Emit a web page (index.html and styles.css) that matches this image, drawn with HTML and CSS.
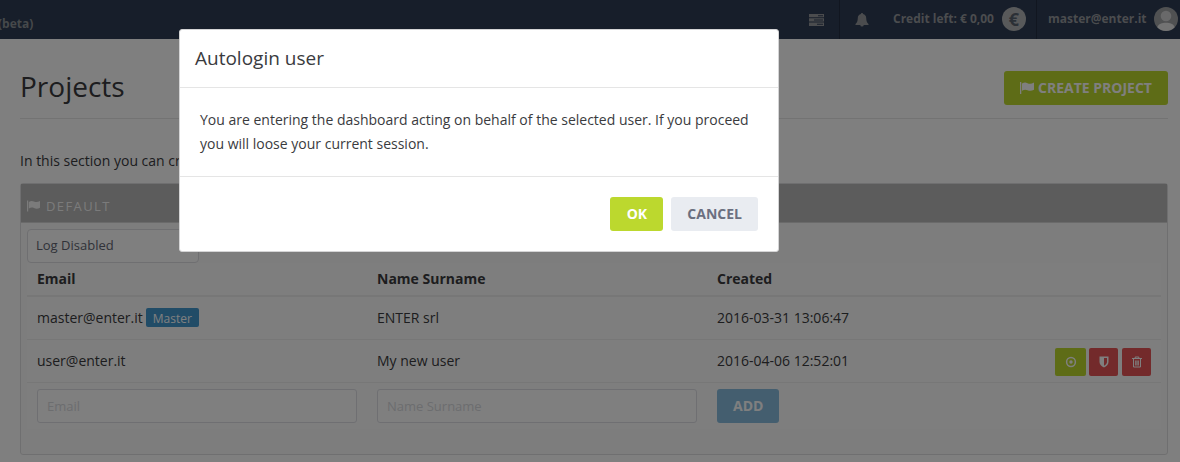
FILE: index.html
```html
<!DOCTYPE html>
<html lang="en">
<head>
<meta charset="utf-8">
<title>Projects</title>
<link rel="stylesheet" href="styles.css">
</head>
<body>
<header class="topbar">
  <span class="brand">(beta)</span>
  <nav class="nav">
    <a class="nav-tasks"><svg width="15" height="12" viewBox="0 0 15 12"><path fill="currentColor" fill-rule="evenodd" d="M0 0h15v3.300H0zM0 4.200h15v3.400H0zM0 8.500h15v3.400H0zM9 1.200v1h5v-1zM5 5.400v1h9v-1zM8 9.700v1h6v-1z"/></svg></a>
    <a class="nav-bell"><svg width="14" height="14" viewBox="0 0 14 14"><path fill="currentColor" d="M7 0c.6 0 1 .4 1 1 2 .4 3.200 2 3.200 4 0 3.200.9 4.800 2.300 5.900v1H8.700a1.700 1.700 0 0 1-3.400 0H.5v-1C1.900 9.800 2.800 8.200 2.800 5 2.800 3 4 1.400 6 1c0-.6.4-1 1-1z"/></svg></a>
    <a class="nav-credit">Credit left: € 0,00 <span class="coin">€</span></a>
    <a class="nav-user">master@enter.it <svg class="avatar" width="24" height="24" viewBox="0 0 24 24"><circle cx="12" cy="12" r="12" fill="#a0a2a4"/><circle cx="12" cy="9" r="5.300" fill="#d2d3d4"/><path fill="#e6e6e6" d="M3.300 20.200C4.500 17 8 15.800 12 15.800s7.500 1.200 8.700 4.400A12 12 0 0 1 3.300 20.200z"/></svg></a>
  </nav>
</header>
<main class="page">
  <div class="page-head">
    <h1>Projects</h1>
    <button class="btn green create"><svg width="14" height="12" viewBox="0 0 14 12"><path fill="currentColor" d="M0 0h1.300v12H0zM2 1.600C4 .4 5.500.2 7.500 1.200S11.500 2 14 .6v7.200c-2.500 1.400-4.500 1.300-6.500.4S4 7.600 2 8.800z"/></svg> CREATE PROJECT</button>
  </div>
  <p class="intro">In this section you can create and manage your projects.</p>
  <section class="panel">
    <h2 class="panel-title"><svg width="13" height="12" viewBox="0 0 14 12"><path fill="currentColor" d="M0 0h1.300v12H0zM2 1.600C4 .4 5.500.2 7.500 1.200S11.500 2 14 .6v7.200c-2.500 1.400-4.500 1.300-6.500.4S4 7.600 2 8.800z"/></svg><span>DEFAULT</span></h2>
    <div class="panel-body">
      <div class="select">Log Disabled</div>
      <div class="table">
        <div class="row head"><span>Email</span><span>Name Surname</span><span>Created</span></div>
        <div class="row"><span class="user">master@enter.it <b class="label">Master</b></span><span>ENTER srl</span><span>2016-03-31 13:06:47</span></div>
        <div class="row"><span>user@enter.it</span><span>My new user</span><span>2016-04-06 12:52:01</span>
          <span class="actions">
            <button class="mini green login"><svg width="12" height="12" viewBox="0 0 12 12"><circle cx="6" cy="6" r="4.400" fill="none" stroke="currentColor" stroke-width="1.500"/><circle cx="6" cy="6" r="1.700" fill="currentColor"/></svg></button>
            <button class="mini red"><svg width="10" height="12" viewBox="0 0 10 12"><path fill="currentColor" fill-rule="evenodd" d="M.5.500h9V6c0 2.500-2 4.300-4.500 5.500C2.500 10.300.5 8.500.5 6zM5 2v7.700C6.800 8.700 8 7.600 8 6V2z"/></svg></button>
            <button class="mini red"><svg width="10" height="12" viewBox="0 0 10 12"><path fill="none" stroke="currentColor" d="M0 2.500h10M3.200 2.500V1h3.600v1.500M1.500 2.500v8.500h7V2.500M3.700 4.500v5M5 4.500v5M6.300 4.500v5"/></svg></button>
          </span>
        </div>
        <div class="row last"><span><input class="field" placeholder="Email"></span><span><input class="field" placeholder="Name Surname"></span><span><button class="btn add">ADD</button></span></div>
      </div>
    </div>
  </section>
</main>
<div class="backdrop">
  <div class="modal" role="dialog">
    <h4 class="modal-head">Autologin user</h4>
    <p class="modal-body">You are entering the dashboard acting on behalf of the selected user. If you proceed you will loose your current session.</p>
    <div class="modal-foot"><button class="btn green ok">OK</button><button class="btn cancel">CANCEL</button></div>
  </div>
</div>
</body>
</html>
```
FILE: styles.css
```css
* { box-sizing: border-box; }
body { margin: 0; height: 462px; overflow: hidden; background: #fff; color: #3a3b3e; font: 14px/20px "Open Sans", "Noto Sans", sans-serif; }
h1, h2, h4, p { margin: 0; font-weight: 400; }
button, input { font-family: inherit; margin: 0; }
svg { display: block; flex: none; }
.topbar { height: 39px; display: flex; justify-content: space-between; background: #2e3c54; font-size: 12px; font-weight: 700; line-height: 16px; }
.brand { padding-top: 16px; margin-left: -2px; color: #8c9296; }
.nav { display: flex; height: 39px; color: #96999d; }
.nav a { display: flex; align-items: center; }
.nav-tasks { width: 31px; border-right: 1px solid #222d40; }
.nav-bell { width: 53px; padding-left: 15px; }
.nav-credit { width: 144px; justify-content: space-between; padding-right: 10px; border-right: 1px solid #222d40; padding-bottom: 1px; }
.nav-user { width: 143px; padding-left: 11px; justify-content: space-between; padding-right: 2px; padding-bottom: 1px; }
.coin { width: 24px; height: 24px; border-radius: 50%; background: #b0b2b4; color: #57606c; font-size: 18px; line-height: 24px; text-align: center; }
.page { padding: 0 12px 0 20px; }
.page-head { height: 80px; border-bottom: 1px solid #e6e6e6; display: flex; justify-content: space-between; }
h1 { font-size: 28px; line-height: 40px; padding-top: 27px; }
.btn { height: 34px; padding: 0 16px; border: 0; border-radius: 3px; color: #fff; font-size: 14px; font-weight: 700; line-height: 20px; }
.green { background: #bcd82e; }
.create { width: 164px; margin-top: 32px; display: flex; align-items: center; justify-content: center; gap: 4px; padding: 0; white-space: nowrap; }
.intro { padding-top: 32px; height: 64px; }
.panel { height: 272px; border: 1px solid #dfdfe1; border-radius: 3px; background: #fbfbfb; }
.panel-title { height: 39px; padding: 6px 6px 0; background: #b8b8b8; border-bottom: 1px solid #d4d4d4; color: #f6f6f6; font-size: 13px; letter-spacing: 1.4px; display: flex; align-items: center; gap: 6px; }
.panel-body { padding: 6px; }
.select { width: 172px; height: 34px; border: 1px solid #dedee2; border-radius: 4px; background: #fff; padding: 5px 8px; font-size: 13px; color: #626572; }
.table { background: #fdfdfd; }
.row { display: grid; grid-template-columns: 340px 340px 340px 1fr; height: 43px; padding: 0 10px; align-items: center; border-bottom: 1px solid #efefef; }
.head { height: 34px; border-bottom: 2px solid #efefef; font-weight: 700; }
.last { height: 46px; border: 0; }
.user { display: flex; gap: 3px; }
.label { height: 19px; width: 53px; border-radius: 2px; background: #4398cf; font-size: 12px; line-height: 21px; font-weight: 400; color: #fff; text-align: center; }
.actions { display: flex; gap: 4px; margin: 2px 0 0 -2px; }
.mini { width: 29px; height: 28px; border: 0; border-radius: 2px; padding: 0; color: #fff; display: grid; place-items: center; }
.login { width: 31px; margin-right: -1px; }
.red { background: #e75456; }
.field { width: 320px; height: 34px; border: 1px solid #dedfe5; border-radius: 3px; background: #fff; padding: 0 9px; font-size: 13px; display: block; }
.field::placeholder { color: #d8dade; }
.add { background: #89bddf; width: 62px; display: block; }
.backdrop { position: fixed; inset: 0; background: rgba(0,0,0,.5); padding: 29px 0 0 179px; }
.modal { width: 600px; height: 223px; background: #fff; border: 1px solid #d4d4d5; border-radius: 3px; }
.modal-head { height: 58px; padding: 16px 15px; font-size: 19px; line-height: 24px; border-bottom: 1px solid #e5e5e5; }
.modal-body { height: 89px; padding: 20px; line-height: 24px; border-bottom: 1px solid #e5e5e5; }
.modal-foot { padding: 20px; display: flex; gap: 8px; justify-content: flex-end; }
.ok { width: 53px; }
.cancel { background: #e9ecf1; color: #6b6f80; }
```
